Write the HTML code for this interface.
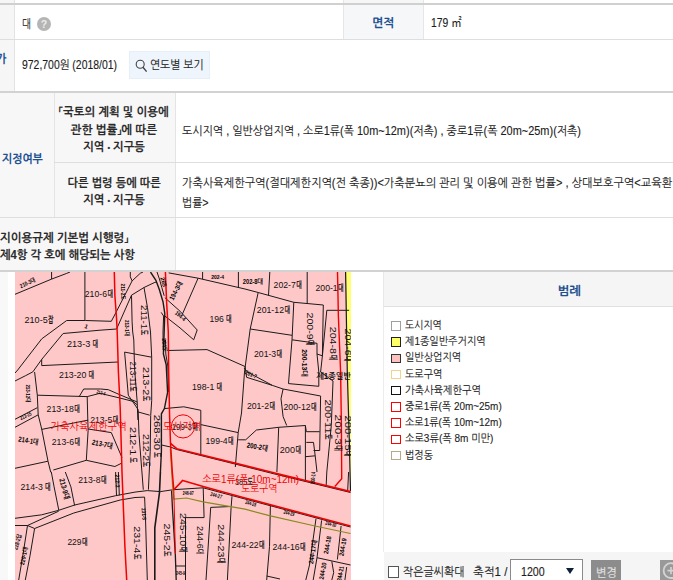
<!DOCTYPE html>
<html lang="ko">
<head>
<meta charset="utf-8">
<title>토지이용계획</title>
<style>
html,body{margin:0;padding:0;}
body{width:673px;height:580px;overflow:hidden;background:#fff;position:relative;font-family:"Liberation Sans","NanumGothic","Noto Sans CJK KR",sans-serif;font-size:12px;color:#1c1c1c;}
.abs{position:absolute;}
.hl{position:absolute;left:0;width:673px;height:1px;background:#dedede;}
.t{position:absolute;white-space:nowrap;line-height:20px;height:20px;-webkit-text-stroke:0.12px currentColor;}
.b{font-weight:bold;font-size:12px;color:#2a2a2a;}
.bl{color:#1d4f91;}
.c{width:300px;text-align:center;}
.c .s{transform-origin:50% 50%;}
.s{display:inline-block;transform-origin:0 50%;}
.lg{position:absolute;left:391px;width:7.5px;height:7.5px;border:1px solid #999;}
.l11{font-size:11px;}
.mt{font-family:"Liberation Sans","NanumGothic",sans-serif;}
</style>
</head>
<body>
<div class="abs" style="left:0;top:0;width:14px;height:91px;background:#f6f6f7;"></div>
<div class="abs" style="left:14px;top:0;width:1px;height:91px;background:#e3e3e3;"></div>
<div class="abs" style="left:343px;top:0;width:81px;height:3px;background:#f6f6f7;border-left:1px solid #e6e6e6;border-right:1px solid #e6e6e6;box-sizing:border-box;"></div>
<div class="abs" style="left:0;top:3px;width:673px;height:2px;background:#d0d0d0;"></div>
<div class="hl" style="top:39px;"></div>
<div class="abs" style="left:37px;top:16.5px;width:14px;height:14px;border-radius:50%;background:#b5b5b5;color:#ececec;font-size:10.5px;font-weight:bold;line-height:14.5px;text-align:center;">?</div>
<div class="abs" style="left:343px;top:5px;width:81px;height:34px;background:#f6f7f9;border-left:1px solid #e6e6e6;border-right:1px solid #e6e6e6;box-sizing:border-box;"></div>
<div class="abs" style="left:129px;top:51px;width:81px;height:28px;background:#eef5fc;border:1px solid #e6eef7;box-sizing:border-box;"></div>
<svg class="abs" style="left:134px;top:58px;" width="14" height="15" viewBox="134 58 14 15"><circle cx="140.2" cy="64.2" r="4" fill="none" stroke="#444" stroke-width="1.1"/><path d="M143 67.2L146.6 71.6" stroke="#444" stroke-width="1.4" fill="none"/></svg>
<div class="t" style="left:22px;top:14.0px;"><span id="t_dae" class="s" style="transform:scaleX(0.7978)">대</span></div>
<div class="t b bl c" style="left:233.5px;top:13.0px;"><span id="t_myun" class="s" style="transform:scaleX(0.9751)">면적</span></div>
<div class="t" style="left:431px;top:13.0px;"><span id="t_area" class="s" style="transform:scaleX(0.8626)">179 ㎡</span></div>
<div class="t b bl" style="left:-4px;top:49.0px;"><span id="t_ga" class="s" style="transform:scaleX(0.9200)">가</span></div>
<div class="t" style="left:22px;top:54.5px;"><span id="t_price" class="s" style="transform:scaleX(0.8686)">972,700원 (2018/01)</span></div>
<div class="t" style="left:150px;top:55.0px;"><span id="t_btn" class="s" style="transform:scaleX(0.8956)">연도별 보기</span></div>
<div class="abs" style="left:0;top:91px;width:673px;height:2px;background:#d2d2d2;"></div>
<div class="abs" style="left:0;top:93px;width:175px;height:177px;background:#f7f7f7;"></div>
<div class="abs" style="left:54px;top:93px;width:1px;height:125px;background:#e4e4e4;"></div>
<div class="abs" style="left:175px;top:93px;width:1px;height:177px;background:#e4e4e4;"></div>
<div class="hl" style="left:54px;width:619px;top:162px;"></div>
<div class="hl" style="top:217px;"></div>
<div class="t b bl" style="left:2px;top:149.3px;"><span id="t_jj" class="s" style="transform:scaleX(0.9042)">지정여부</span></div>
<div class="t b c" style="left:-35.8px;top:101.5px;"><span id="t_h1a" class="s" style="transform:scaleX(0.9469)">「국토의 계획 및 이용에</span></div>
<div class="t b c" style="left:-35.8px;top:119.5px;"><span id="t_h1b" class="s" style="transform:scaleX(0.9583)">관한 법률」에 따른</span></div>
<div class="t b c" style="left:-35.8px;top:136.5px;"><span id="t_h1c" class="s" style="transform:scaleX(0.9331)">지역 <span style="font-size:8px;position:relative;top:-1px">•</span> 지구등</span></div>
<div class="t b c" style="left:-35.8px;top:172.5px;"><span id="t_h2a" class="s" style="transform:scaleX(0.9277)">다른 법령 등에 따른</span></div>
<div class="t b c" style="left:-35.8px;top:190.0px;"><span id="t_h2b" class="s" style="transform:scaleX(0.9331)">지역 <span style="font-size:8px;position:relative;top:-1px">•</span> 지구등</span></div>
<div class="t b" style="left:0px;top:227.5px;"><span id="t_h3a" class="s" style="transform:scaleX(0.9506)">지이용규제 기본법 시행령」</span></div>
<div class="t b" style="left:0px;top:244.5px;"><span id="t_h3b" class="s" style="transform:scaleX(0.9362)">제4항 각 호에 해당되는 사항</span></div>
<div class="t" style="left:182px;top:120.5px;"><span id="t_r1" class="s" style="transform:scaleX(0.9119)">도시지역 , 일반상업지역 , 소로1류(폭 10m~12m)(저촉) , 중로1류(폭 20m~25m)(저촉)</span></div>
<div class="t" style="left:182px;top:173.0px;"><span id="t_r2" class="s" style="transform:scaleX(0.9256)"><span id="t_r2a">가축사육제한구역(절대제한지역(전 축종))&lt;가축분뇨의 관리 및 이용에 관한 법률&gt;</span> , 상대보호구역&lt;교육환경 보호에 관한</span></div>
<div class="t" style="left:182px;top:192.5px;"><span id="t_r3" class="s" style="transform:scaleX(0.8993)">법률&gt;</span></div>
<div class="abs" style="left:0;top:270px;width:673px;height:2px;background:#d2d2d2;"></div>
<div class="abs" style="left:0;top:272px;width:8px;height:308px;background:#f8f8f8;"></div>
<div class="abs" style="left:15px;top:272px;width:336px;height:308px;background:#ffc8c8;overflow:hidden;">
<svg id="mapsvg" width="336" height="308" viewBox="15 272 336 308" style="position:absolute;left:0;top:0;" font-family="'Liberation Sans','NanumGothic',sans-serif">
<rect x="15" y="272" width="336" height="308" fill="#ffc8c8"/>
<path d="M346 272 L351 272 L351 492 L350.5 491 L349.3 440 L347.3 372 Z" fill="#ffff70"/>
<g shape-rendering="auto">
<path d="M15.0 294.3 L51.6 279.1 L66.7 273.4 L70.0 272.0" stroke="#1a1a1a" stroke-width="1" fill="none"/>
<path d="M51.6 272.0 L51.6 279.1" stroke="#1a1a1a" stroke-width="1" fill="none"/>
<path d="M84.9 272.0 L84.9 320.3" stroke="#1a1a1a" stroke-width="1" fill="none"/>
<path d="M15.0 373.0 L17.7 370.0 L41.7 338.9 L66.7 320.5 L85.4 320.5 L111.3 321.3 L116.0 312.4 L132.1 280.9 L140.4 273.2 L143.0 272.0" stroke="#1a1a1a" stroke-width="1" fill="none"/>
<path d="M132.1 280.9 L130.3 276.8 L130.3 272.0" stroke="#1a1a1a" stroke-width="1" fill="none"/>
<path d="M15.0 381.0 L25.7 375.6 L32.8 371.9 L41.7 359.4 L63.1 333.5 L100.0 330.2 L116.6 329.0 L131.5 295.2 L144.0 287.5 L154.1 282.7 L157.0 281.8" stroke="#1a1a1a" stroke-width="1" fill="none"/>
<path d="M41.7 359.4 L41.7 365.6 L118.0 362.0" stroke="#1a1a1a" stroke-width="1" fill="none"/>
<path d="M150.5 272.0 L155.9 280.3 L159.4 289.8 L163.0 301.7 L164.8 313.6 L163.4 353.8 L166.2 364.8 L167.6 392.4 L164.4 408.6 L161.4 413.8 L161.4 451.7 L160.4 472.0" stroke="#1a1a1a" stroke-width="1.4" fill="none"/>
<path d="M157.0 272.0 L159.4 279.0 L161.8 287.5 L164.2 295.8" stroke="#1a1a1a" stroke-width="1" fill="none"/>
<path d="M161.2 312.4 L163.6 316.0 L163.0 332.0 L163.2 350.0" stroke="#1a1a1a" stroke-width="1" fill="none"/>
<path d="M165.5 340.0 L165.8 354.0 L167.8 366.0 L168.6 392.0" stroke="#1a1a1a" stroke-width="1" fill="none"/>
<path d="M131.5 295.2 L132.1 321.9 L132.7 332.0 L133.8 340.0 L134.5 367.6 L137.2 402.0 L137.9 420.0" stroke="#1a1a1a" stroke-width="1" fill="none"/>
<path d="M144.0 287.5 L147.5 307.7 L150.5 332.0 L151.7 357.2 L151.7 400.7 L150.7 415.5 L150.2 451.7 L148.4 489.7" stroke="#1a1a1a" stroke-width="1" fill="none"/>
<path d="M124.6 352.1 L151.7 357.2" stroke="#1a1a1a" stroke-width="1" fill="none"/>
<path d="M124.6 352.1 L128.3 395.2 L138.1 409.5 L139.0 434.5 L143.3 489.7" stroke="#1a1a1a" stroke-width="1" fill="none"/>
<path d="M168.7 272.9 L198.1 278.2 L245.0 289.0 L258.2 292.5 L293.8 302.3 L323.3 305.0" stroke="#1a1a1a" stroke-width="1" fill="none"/>
<path d="M198.1 278.2 L182.1 314.8" stroke="#1a1a1a" stroke-width="1" fill="none"/>
<path d="M164.8 297.6 L180.0 311.2 L197.2 330.0 L193.7 339.8 L180.0 327.9 L164.8 316.0" stroke="#1a1a1a" stroke-width="1" fill="none"/>
<path d="M202.6 272.0 L202.6 279.1" stroke="#1a1a1a" stroke-width="1" fill="none"/>
<path d="M238.4 272.0 L238.4 287.5" stroke="#1a1a1a" stroke-width="1" fill="none"/>
<path d="M167.4 350.5 L207.0 349.6 L245.0 366.5 L246.6 377.3 L272.4 385.4 L283.1 389.0 L320.6 396.0" stroke="#1a1a1a" stroke-width="1" fill="none"/>
<path d="M269.8 272.0 L268.5 295.5" stroke="#1a1a1a" stroke-width="1" fill="none"/>
<path d="M307.2 272.0 L307.2 303.5" stroke="#1a1a1a" stroke-width="1" fill="none"/>
<path d="M258.2 292.5 L250.2 329.0 L244.5 372.0 L241.5 413.0 L238.2 432.6 L235.6 463.8 L235.3 467.0" stroke="#1a1a1a" stroke-width="1" fill="none"/>
<path d="M250.2 329.0 L292.0 335.3" stroke="#1a1a1a" stroke-width="1" fill="none"/>
<path d="M293.8 302.3 L292.0 339.8 L317.0 343.3 L317.0 354.0 L322.4 355.8 L323.3 305.0" stroke="#1a1a1a" stroke-width="1" fill="none"/>
<path d="M292.0 339.8 L289.4 372.0 L288.5 383.6 L318.8 386.3 L318.8 372.0 L317.0 354.0" stroke="#1a1a1a" stroke-width="1" fill="none"/>
<path d="M326.8 310.3 L349.1 310.3" stroke="#1a1a1a" stroke-width="1" fill="none"/>
<path d="M326.8 310.3 L322.4 355.8 L320.6 372.0 L333.0 381.0 L331.3 425.5 L326.8 472.0 L326.2 485.0" stroke="#1a1a1a" stroke-width="1" fill="none"/>
<path d="M345.6 272.0 L347.3 372.0 L349.3 440.0 L350.5 491.0" stroke="#1a1a1a" stroke-width="1.2" fill="none"/>
<path d="M244.0 368.0 L247.5 372.0 L272.4 385.4" stroke="#1a1a1a" stroke-width="1" fill="none"/>
<path d="M34.6 372.0 L37.3 395.2 L38.2 414.8 L41.7 429.0 L48.0 461.2 L50.7 472.0 L51.3 472.0 L54.1 486.9 L58.8 510.2" stroke="#1a1a1a" stroke-width="1" fill="none"/>
<path d="M37.3 395.2 L87.2 396.6" stroke="#1a1a1a" stroke-width="1" fill="none"/>
<path d="M79.2 396.6 L83.7 389.0 L100.6 389.0 L108.3 389.7 L119.3 394.5 L137.2 402.0" stroke="#1a1a1a" stroke-width="1" fill="none"/>
<path d="M87.2 396.6 L100.0 393.3 L119.3 397.9 L133.1 401.4 L137.2 404.8" stroke="#1a1a1a" stroke-width="1" fill="none"/>
<path d="M87.2 396.6 L88.1 430.8 L86.3 460.3" stroke="#1a1a1a" stroke-width="1" fill="none"/>
<path d="M41.7 429.4 L88.1 420.1" stroke="#1a1a1a" stroke-width="1" fill="none"/>
<path d="M88.1 429.0 L111.3 432.6 L122.0 457.6" stroke="#1a1a1a" stroke-width="1" fill="none"/>
<path d="M48.0 461.2 L15.0 468.3" stroke="#1a1a1a" stroke-width="1" fill="none"/>
<path d="M53.3 470.0 L86.3 460.3 L114.9 466.5 L122.0 463.0" stroke="#1a1a1a" stroke-width="1" fill="none"/>
<path d="M15.0 419.3 L37.3 407.7" stroke="#1a1a1a" stroke-width="1" fill="none"/>
<path d="M15.0 427.3 L38.2 414.8" stroke="#1a1a1a" stroke-width="1" fill="none"/>
<path d="M164.2 408.6 L183.8 406.8 L200.8 410.3 L200.8 455.0" stroke="#1a1a1a" stroke-width="1" fill="none"/>
<path d="M200.8 424.6 L238.2 432.6" stroke="#1a1a1a" stroke-width="1" fill="none"/>
<path d="M238.2 439.8 L245.7 439.8 L256.4 430.0 L278.7 427.3 L305.4 425.5 L306.3 431.7 L319.7 431.7" stroke="#1a1a1a" stroke-width="1" fill="none"/>
<path d="M161.6 445.0 L170.5 447.0 L176.7 449.5 L245.0 466.5 L270.7 473.0 L350.5 492.5" stroke="#1a1a1a" stroke-width="1" fill="none"/>
<path d="M137.2 411.7 L149.7 415.2" stroke="#1a1a1a" stroke-width="1" fill="none"/>
<path d="M283.1 389.0 L281.0 398.7 L283.1 416.6 L286.7 425.5" stroke="#1a1a1a" stroke-width="1" fill="none"/>
<path d="M320.6 396.0 L319.7 450.5 L313.5 450.5" stroke="#1a1a1a" stroke-width="1" fill="none"/>
<path d="M278.7 427.3 L276.9 472.0" stroke="#1a1a1a" stroke-width="1" fill="none"/>
<path d="M305.4 425.5 L305.4 481.3" stroke="#1a1a1a" stroke-width="1" fill="none"/>
<path d="M306.3 442.4 L313.5 442.4 L315.2 455.8 L305.4 456.7" stroke="#1a1a1a" stroke-width="1" fill="none"/>
<path d="M315.2 455.8 L317.0 472.0" stroke="#1a1a1a" stroke-width="1" fill="none"/>
<path d="M65.3 472.0 L70.9 486.9 L74.6 505.5" stroke="#1a1a1a" stroke-width="1" fill="none"/>
<path d="M15.0 518.3 L41.7 514.8 L58.7 510.3 L74.7 505.0 L115.7 495.7 L135.0 492.1 L147.3 490.6 L160.4 491.6 L173.4 489.7 L203.2 487.8" stroke="#1a1a1a" stroke-width="1" fill="none"/>
<path d="M15.0 525.5 L27.5 525.5 L58.7 511.2" stroke="#1a1a1a" stroke-width="1" fill="none"/>
<path d="M27.5 525.5 L34.6 528.5 L73.8 513.0 L120.2 500.0 L135.0 497.5 L144.6 497.1" stroke="#1a1a1a" stroke-width="1" fill="none"/>
<path d="M27.5 525.5 L23.4 552.0 L18.7 580.0" stroke="#1a1a1a" stroke-width="1" fill="none"/>
<path d="M34.6 528.5 L30.0 555.8 L25.3 580.0" stroke="#1a1a1a" stroke-width="1" fill="none"/>
<path d="M115.6 472.0 L116.5 495.8" stroke="#1a1a1a" stroke-width="1" fill="none"/>
<path d="M118.4 472.0 L119.3 495.3" stroke="#1a1a1a" stroke-width="1" fill="none"/>
<path d="M144.6 497.1 L145.5 518.6 L147.3 580.0" stroke="#1a1a1a" stroke-width="1" fill="none"/>
<path d="M160.4 472.0 L159.5 492.5 L154.8 527.9 L154.8 580.0" stroke="#1a1a1a" stroke-width="1.6" fill="none"/>
<path d="M171.6 490.6 L172.5 509.2 L175.3 554.0 L176.2 580.0" stroke="#1a1a1a" stroke-width="1.3" fill="none"/>
<path d="M203.2 487.8 L204.1 517.6 L185.5 517.6 L185.5 580.0" stroke="#1a1a1a" stroke-width="1" fill="none"/>
<path d="M175.3 566.0 L185.5 566.0" stroke="#1a1a1a" stroke-width="1" fill="none"/>
<path d="M210.7 507.4 L206.0 580.0" stroke="#1a1a1a" stroke-width="1" fill="none"/>
<path d="M210.7 507.4 L231.1 506.5" stroke="#1a1a1a" stroke-width="1" fill="none"/>
<path d="M232.0 496.2 L231.1 507.4 L227.4 580.0" stroke="#1a1a1a" stroke-width="1" fill="none"/>
<path d="M203.2 487.8 L245.0 499.0 L350.5 527.0" stroke="#1a1a1a" stroke-width="1" fill="none"/>
<path d="M270.4 504.6 L269.5 546.5 L266.7 580.0" stroke="#1a1a1a" stroke-width="1" fill="none"/>
<path d="M316.0 518.6 L309.5 565.0 L305.8 580.0" stroke="#1a1a1a" stroke-width="1" fill="none"/>
<path d="M321.6 520.4 L317.0 557.7 L313.2 580.0" stroke="#1a1a1a" stroke-width="1" fill="none"/>
<path d="M317.0 557.7 L350.5 565.0" stroke="#1a1a1a" stroke-width="1" fill="none"/>
<path d="M341.1 526.0 L337.4 559.5" stroke="#1a1a1a" stroke-width="1" fill="none"/>
<path d="M331.8 561.4 L333.7 572.6 L331.8 580.0" stroke="#1a1a1a" stroke-width="1" fill="none"/>
<path d="M346.7 567.0 L344.9 580.0" stroke="#1a1a1a" stroke-width="1" fill="none"/>
<path d="M348.6 472.0 L347.7 490.6" stroke="#1a1a1a" stroke-width="1" fill="none"/>
<path d="M266.7 576.0 L280.0 579.0" stroke="#1a1a1a" stroke-width="1" fill="none"/>
</g>
<path d="M170.3 449.0 L172.6 486.0 L173.8 499.0 L186.5 498.0 L203.2 501.8 L245.0 509.2 L270.4 515.8 L315.0 526.0 L350.5 533.5" stroke="#8a8a20" stroke-width="1.2" fill="none"/>
<path d="M114.3 272.0 L114.9 295.8 L116.6 319.5 L117.2 332.0 L118.4 372.0 L120.2 407.7 L122.0 472.0 L123.0 498.0 L124.9 546.5 L126.7 580.0" stroke="#f00000" stroke-width="1.5" fill="none" stroke-linejoin="round"/>
<path d="M165.4 272.0 L166.6 301.7 L168.3 332.0 L168.7 372.0 L169.6 416.6 L170.5 443.3 L172.3 472.0 L173.8 489.7" stroke="#f00000" stroke-width="1.5" fill="none" stroke-linejoin="round"/>
<path d="M173.8 489.7 L174.6 520.0 L175.3 554.0" stroke="#f00000" stroke-width="1" fill="none" stroke-linejoin="round"/>
<path d="M170.5 443.3 L176.7 448.7 L245.0 465.6 L270.7 472.0 L350.5 491.6" stroke="#f00000" stroke-width="1.6" fill="none" stroke-linejoin="round"/>
<path d="M173.8 489.7 L182.7 480.4 L203.2 486.5 L245.0 498.0 L350.5 526.0" stroke="#f00000" stroke-width="1.6" fill="none" stroke-linejoin="round"/>
<path d="M337.5 272.0 L338.4 316.6 L340.6 372.0 L341.4 425.5 L341.7 478.8 L334.8 486.5" stroke="#f00000" stroke-width="1.4" fill="none" stroke-linejoin="round"/>
<circle cx="183" cy="426.4" r="11.6" fill="none" stroke="#f00000" stroke-width="1"/>
<g>
<g font-size="9.3" fill="#111" dominant-baseline="central"><text x="84.8" y="293.8" textLength="22.2" lengthAdjust="spacingAndGlyphs" dominant-baseline="central">210-6</text><text x="107.4" y="293.8" textLength="5.4" lengthAdjust="spacingAndGlyphs" dominant-baseline="central" stroke="#111" stroke-width="0.35">대</text></g>
<g font-size="9.3" fill="#111" dominant-baseline="central"><text x="24.5" y="320.0" textLength="23.2" lengthAdjust="spacingAndGlyphs" dominant-baseline="central">210-5</text><text x="48.1" y="320.0" textLength="5.4" lengthAdjust="spacingAndGlyphs" dominant-baseline="central" stroke="#111" stroke-width="0.35">잡</text></g>
<g font-size="9.3" fill="#111" dominant-baseline="central"><text x="66.9" y="344.2" textLength="23.4" lengthAdjust="spacingAndGlyphs" dominant-baseline="central">213-3</text><text x="92.5" y="344.2" textLength="5.4" lengthAdjust="spacingAndGlyphs" dominant-baseline="central" stroke="#111" stroke-width="0.35">대</text></g>
<g font-size="9.3" fill="#111" dominant-baseline="central"><text x="59.0" y="374.7" textLength="27.4" lengthAdjust="spacingAndGlyphs" dominant-baseline="central">213-20</text><text x="88.6" y="374.7" textLength="5.4" lengthAdjust="spacingAndGlyphs" dominant-baseline="central" stroke="#111" stroke-width="0.35">대</text></g>
<g font-size="9.3" fill="#111" dominant-baseline="central"><text x="46.6" y="409.4" textLength="27.2" lengthAdjust="spacingAndGlyphs" dominant-baseline="central">213-18</text><text x="74.2" y="409.4" textLength="5.4" lengthAdjust="spacingAndGlyphs" dominant-baseline="central" stroke="#111" stroke-width="0.35">대</text></g>
<g font-size="9.3" fill="#111" dominant-baseline="central"><text x="90.2" y="419.8" textLength="22.2" lengthAdjust="spacingAndGlyphs" dominant-baseline="central">213-5</text><text x="112.8" y="419.8" textLength="5.4" lengthAdjust="spacingAndGlyphs" dominant-baseline="central" stroke="#111" stroke-width="0.35">대</text></g>
<g font-size="9.3" fill="#111" dominant-baseline="central"><text x="51.8" y="442.4" textLength="22.2" lengthAdjust="spacingAndGlyphs" dominant-baseline="central">213-6</text><text x="74.4" y="442.4" textLength="5.4" lengthAdjust="spacingAndGlyphs" dominant-baseline="central" stroke="#111" stroke-width="0.35">대</text></g>
<text x="102.4" y="444.2" font-size="7.5" fill="#000" text-anchor="middle" dominant-baseline="central" font-weight="bold" textLength="21.0" lengthAdjust="spacingAndGlyphs" transform="rotate(12 102.4 444.2)">213-7대</text>
<text x="28.4" y="440.7" font-size="7.5" fill="#000" text-anchor="middle" dominant-baseline="central" font-weight="bold" textLength="20.0" lengthAdjust="spacingAndGlyphs" transform="rotate(10 28.4 440.7)">214-1대</text>
<g font-size="9.3" fill="#111" dominant-baseline="central"><text x="20.5" y="487.3" textLength="22.4" lengthAdjust="spacingAndGlyphs" dominant-baseline="central">214-3</text><text x="45.1" y="487.3" textLength="5.4" lengthAdjust="spacingAndGlyphs" dominant-baseline="central" stroke="#111" stroke-width="0.35">대</text></g>
<g font-size="9.3" fill="#111" dominant-baseline="central"><text x="78.3" y="479.8" textLength="22.2" lengthAdjust="spacingAndGlyphs" dominant-baseline="central">213-8</text><text x="100.9" y="479.8" textLength="5.4" lengthAdjust="spacingAndGlyphs" dominant-baseline="central" stroke="#111" stroke-width="0.35">대</text></g>
<g font-size="9.3" fill="#111" dominant-baseline="central"><text x="67.4" y="541.8" textLength="14.2" lengthAdjust="spacingAndGlyphs" dominant-baseline="central">229</text><text x="82.0" y="541.8" textLength="5.4" lengthAdjust="spacingAndGlyphs" dominant-baseline="central" stroke="#111" stroke-width="0.35">대</text></g>
<text x="64.3" y="488.8" font-size="7.5" fill="#000" text-anchor="middle" dominant-baseline="central" font-weight="bold" textLength="21.0" lengthAdjust="spacingAndGlyphs" transform="rotate(75 64.3 488.8)">213-9대</text>
<text x="27.5" y="283.0" font-size="6" fill="#000" text-anchor="middle" dominant-baseline="central" font-weight="bold" textLength="16.0" lengthAdjust="spacingAndGlyphs" transform="rotate(-25 27.5 283.0)">210-3대</text>
<text x="122.5" y="291.6" font-size="6" fill="#000" text-anchor="middle" dominant-baseline="central" font-weight="bold" textLength="16.0" lengthAdjust="spacingAndGlyphs" transform="rotate(90 122.5 291.6)">211-2도</text>
<text x="127.3" y="328.0" font-size="6" fill="#000" text-anchor="middle" dominant-baseline="central" font-weight="bold" textLength="16.0" lengthAdjust="spacingAndGlyphs" transform="rotate(90 127.3 328.0)">213-1대</text>
<text x="27.5" y="393.4" font-size="6" fill="#000" text-anchor="middle" dominant-baseline="central" font-weight="bold" textLength="18.0" lengthAdjust="spacingAndGlyphs" transform="rotate(90 27.5 393.4)">213-12대</text>
<text x="25.7" y="415.7" font-size="5.5" fill="#000" text-anchor="middle" dominant-baseline="central" font-weight="bold" textLength="12.0" lengthAdjust="spacingAndGlyphs" transform="rotate(-25 25.7 415.7)">213-15</text>
<text x="17.5" y="542.0" font-size="6" fill="#000" text-anchor="middle" dominant-baseline="central" font-weight="bold" textLength="16.0" lengthAdjust="spacingAndGlyphs" transform="rotate(-75 17.5 542.0)">228-2답</text>
<text x="24.0" y="556.0" font-size="6" fill="#000" text-anchor="middle" dominant-baseline="central" font-weight="bold" textLength="18.0" lengthAdjust="spacingAndGlyphs" transform="rotate(-78 24.0 556.0)">229-1대</text>
<text x="86.3" y="326.5" font-size="6" fill="#000" text-anchor="middle" dominant-baseline="central" font-weight="bold" transform="rotate(20 86.3 326.5)">1</text>
<g transform="rotate(90 143.7 320.1)" font-size="9.3" fill="#111" dominant-baseline="central"><text x="128.7" y="320.1" textLength="24.2" lengthAdjust="spacingAndGlyphs" dominant-baseline="central">211-1</text><text x="153.3" y="320.1" textLength="5.4" lengthAdjust="spacingAndGlyphs" dominant-baseline="central" stroke="#111" stroke-width="0.35">도</text></g>
<g transform="rotate(90 133.1 376.6)" font-size="8.6" fill="#111" dominant-baseline="central"><text x="118.1" y="376.6" textLength="24.7" lengthAdjust="spacingAndGlyphs" dominant-baseline="central">213-11</text><text x="143.1" y="376.6" textLength="5.0" lengthAdjust="spacingAndGlyphs" dominant-baseline="central" stroke="#111" stroke-width="0.35">도</text></g>
<g transform="rotate(90 146.2 384.1)" font-size="9.3" fill="#111" dominant-baseline="central"><text x="129.2" y="384.1" textLength="28.2" lengthAdjust="spacingAndGlyphs" dominant-baseline="central">213-2</text><text x="157.8" y="384.1" textLength="5.4" lengthAdjust="spacingAndGlyphs" dominant-baseline="central" stroke="#111" stroke-width="0.35">도</text></g>
<g font-size="9.3" fill="#111" dominant-baseline="central"><text x="209.4" y="319.3" textLength="14.4" lengthAdjust="spacingAndGlyphs" dominant-baseline="central">196</text><text x="226.0" y="319.3" textLength="5.4" lengthAdjust="spacingAndGlyphs" dominant-baseline="central" stroke="#111" stroke-width="0.35">대</text></g>
<text x="175.8" y="290.7" font-size="7" fill="#000" text-anchor="middle" dominant-baseline="central" font-weight="bold" textLength="20.0" lengthAdjust="spacingAndGlyphs" transform="rotate(-62 175.8 290.7)">194-3대</text>
<text x="180.5" y="316.0" font-size="6" fill="#000" text-anchor="middle" dominant-baseline="central" font-weight="bold" textLength="12.0" lengthAdjust="spacingAndGlyphs" transform="rotate(40 180.5 316.0)">194-4</text>
<text x="217.7" y="277.3" font-size="6" fill="#000" text-anchor="middle" dominant-baseline="central" font-weight="bold" textLength="13.0" lengthAdjust="spacingAndGlyphs">202-4</text>
<text x="252.8" y="281.0" font-size="7" fill="#000" text-anchor="middle" dominant-baseline="central" font-weight="bold" textLength="20.0" lengthAdjust="spacingAndGlyphs">202-8대</text>
<g font-size="9.3" fill="#111" dominant-baseline="central"><text x="273.6" y="284.5" textLength="22.2" lengthAdjust="spacingAndGlyphs" dominant-baseline="central">202-7</text><text x="296.2" y="284.5" textLength="5.4" lengthAdjust="spacingAndGlyphs" dominant-baseline="central" stroke="#111" stroke-width="0.35">대</text></g>
<g font-size="9.3" fill="#111" dominant-baseline="central"><text x="315.5" y="288.4" textLength="22.2" lengthAdjust="spacingAndGlyphs" dominant-baseline="central">200-1</text><text x="338.1" y="288.4" textLength="5.4" lengthAdjust="spacingAndGlyphs" dominant-baseline="central" stroke="#111" stroke-width="0.35">대</text></g>
<g font-size="9.3" fill="#111" dominant-baseline="central"><text x="256.8" y="310.3" textLength="27.2" lengthAdjust="spacingAndGlyphs" dominant-baseline="central">201-12</text><text x="284.4" y="310.3" textLength="5.4" lengthAdjust="spacingAndGlyphs" dominant-baseline="central" stroke="#111" stroke-width="0.35">대</text></g>
<g font-size="9.3" fill="#111" dominant-baseline="central"><text x="254.0" y="354.0" textLength="22.2" lengthAdjust="spacingAndGlyphs" dominant-baseline="central">201-3</text><text x="276.6" y="354.0" textLength="5.4" lengthAdjust="spacingAndGlyphs" dominant-baseline="central" stroke="#111" stroke-width="0.35">대</text></g>
<g transform="rotate(90 309.9 329.0)" font-size="9.3" fill="#111" dominant-baseline="central"><text x="293.4" y="329.0" textLength="27.2" lengthAdjust="spacingAndGlyphs" dominant-baseline="central">200-9</text><text x="321.0" y="329.0" textLength="5.4" lengthAdjust="spacingAndGlyphs" dominant-baseline="central" stroke="#111" stroke-width="0.35">대</text></g>
<g transform="rotate(90 332.7 343.3)" font-size="9.3" fill="#111" dominant-baseline="central"><text x="316.2" y="343.3" textLength="27.2" lengthAdjust="spacingAndGlyphs" dominant-baseline="central">204-8</text><text x="343.8" y="343.3" textLength="5.4" lengthAdjust="spacingAndGlyphs" dominant-baseline="central" stroke="#111" stroke-width="0.35">대</text></g>
<g transform="rotate(90 348.0 345.0)" font-size="9.3" fill="#111" dominant-baseline="central"><text x="331.5" y="345.0" textLength="27.2" lengthAdjust="spacingAndGlyphs" dominant-baseline="central">204-6</text><text x="359.1" y="345.0" textLength="5.4" lengthAdjust="spacingAndGlyphs" dominant-baseline="central" stroke="#111" stroke-width="0.35">대</text></g>
<text x="304.8" y="363.0" font-size="7.5" fill="#000" text-anchor="middle" dominant-baseline="central" font-weight="bold" textLength="27.6" lengthAdjust="spacingAndGlyphs" transform="rotate(90 304.8 363.0)">200-13대</text>
<g font-size="9.3" fill="#111" dominant-baseline="central"><text x="192.0" y="386.6" textLength="22.4" lengthAdjust="spacingAndGlyphs" dominant-baseline="central">198-1</text><text x="216.6" y="386.6" textLength="5.4" lengthAdjust="spacingAndGlyphs" dominant-baseline="central" stroke="#111" stroke-width="0.35">대</text></g>
<g font-size="9.3" fill="#111" dominant-baseline="central"><text x="205.5" y="441.2" textLength="22.2" lengthAdjust="spacingAndGlyphs" dominant-baseline="central">199-4</text><text x="228.1" y="441.2" textLength="5.4" lengthAdjust="spacingAndGlyphs" dominant-baseline="central" stroke="#111" stroke-width="0.35">대</text></g>
<g font-size="9.3" fill="#111" dominant-baseline="central"><text x="171.7" y="427.0" textLength="20.2" lengthAdjust="spacingAndGlyphs" dominant-baseline="central">199-3</text><text x="192.3" y="427.0" textLength="5.4" lengthAdjust="spacingAndGlyphs" dominant-baseline="central" stroke="#111" stroke-width="0.35">대</text></g>
<g transform="rotate(90 157.2 436.2)" font-size="9.3" fill="#111" dominant-baseline="central"><text x="135.7" y="436.2" textLength="35.4" lengthAdjust="spacingAndGlyphs" dominant-baseline="central">268-30</text><text x="173.3" y="436.2" textLength="5.4" lengthAdjust="spacingAndGlyphs" dominant-baseline="central" stroke="#111" stroke-width="0.35">도</text></g>
<g transform="rotate(90 132.5 445.0)" font-size="9.3" fill="#111" dominant-baseline="central"><text x="114.5" y="445.0" textLength="28.4" lengthAdjust="spacingAndGlyphs" dominant-baseline="central">212-1</text><text x="145.1" y="445.0" textLength="5.4" lengthAdjust="spacingAndGlyphs" dominant-baseline="central" stroke="#111" stroke-width="0.35">도</text></g>
<g transform="rotate(90 146.4 450.5)" font-size="9.3" fill="#111" dominant-baseline="central"><text x="129.9" y="450.5" textLength="27.2" lengthAdjust="spacingAndGlyphs" dominant-baseline="central">212-2</text><text x="157.5" y="450.5" textLength="5.4" lengthAdjust="spacingAndGlyphs" dominant-baseline="central" stroke="#111" stroke-width="0.35">도</text></g>
<g font-size="9.3" fill="#111" dominant-baseline="central"><text x="246.9" y="406.2" textLength="22.2" lengthAdjust="spacingAndGlyphs" dominant-baseline="central">201-2</text><text x="269.5" y="406.2" textLength="5.4" lengthAdjust="spacingAndGlyphs" dominant-baseline="central" stroke="#111" stroke-width="0.35">대</text></g>
<g font-size="9.3" fill="#111" dominant-baseline="central"><text x="283.5" y="407.3" textLength="27.2" lengthAdjust="spacingAndGlyphs" dominant-baseline="central">200-12</text><text x="311.1" y="407.3" textLength="5.4" lengthAdjust="spacingAndGlyphs" dominant-baseline="central" stroke="#111" stroke-width="0.35">대</text></g>
<g font-size="9.3" fill="#111" dominant-baseline="central"><text x="279.8" y="449.6" textLength="15.2" lengthAdjust="spacingAndGlyphs" dominant-baseline="central">200</text><text x="295.4" y="449.6" textLength="5.4" lengthAdjust="spacingAndGlyphs" dominant-baseline="central" stroke="#111" stroke-width="0.35">대</text></g>
<text x="257.3" y="446.9" font-size="7.5" fill="#000" text-anchor="middle" dominant-baseline="central" font-weight="bold" textLength="21.0" lengthAdjust="spacingAndGlyphs" transform="rotate(10 257.3 446.9)">200-2대</text>
<g transform="rotate(90 327.7 419.5)" font-size="9.3" fill="#111" dominant-baseline="central"><text x="307.7" y="419.5" textLength="34.2" lengthAdjust="spacingAndGlyphs" dominant-baseline="central">200-11</text><text x="342.3" y="419.5" textLength="5.4" lengthAdjust="spacingAndGlyphs" dominant-baseline="central" stroke="#111" stroke-width="0.35">도</text></g>
<g transform="rotate(90 337.5 432.6)" font-size="9.3" fill="#111" dominant-baseline="central"><text x="319.5" y="432.6" textLength="30.2" lengthAdjust="spacingAndGlyphs" dominant-baseline="central">200-3</text><text x="350.1" y="432.6" textLength="5.4" lengthAdjust="spacingAndGlyphs" dominant-baseline="central" stroke="#111" stroke-width="0.35">대</text></g>
<g transform="rotate(90 347.7 436.0)" font-size="9.3" fill="#111" dominant-baseline="central"><text x="327.2" y="436.0" textLength="35.2" lengthAdjust="spacingAndGlyphs" dominant-baseline="central">200-15</text><text x="362.8" y="436.0" textLength="5.4" lengthAdjust="spacingAndGlyphs" dominant-baseline="central" stroke="#111" stroke-width="0.35">대</text></g>
<text x="333.6" y="376.0" font-size="8.5" fill="#111" text-anchor="middle" dominant-baseline="central" font-weight="bold" textLength="34.5" lengthAdjust="spacingAndGlyphs">제1종일반</text>
<text x="251.0" y="374.5" font-size="6" fill="#000" text-anchor="middle" dominant-baseline="central" font-weight="bold" textLength="12.0" lengthAdjust="spacingAndGlyphs" transform="rotate(25 251.0 374.5)">201-7</text>
<g transform="rotate(90 137.1 542.8)" font-size="9.3" fill="#111" dominant-baseline="central"><text x="120.6" y="542.8" textLength="27.2" lengthAdjust="spacingAndGlyphs" dominant-baseline="central">231-4</text><text x="148.2" y="542.8" textLength="5.4" lengthAdjust="spacingAndGlyphs" dominant-baseline="central" stroke="#111" stroke-width="0.35">도</text></g>
<g transform="rotate(90 166.9 540.0)" font-size="9.3" fill="#111" dominant-baseline="central"><text x="150.4" y="540.0" textLength="27.2" lengthAdjust="spacingAndGlyphs" dominant-baseline="central">245-2</text><text x="178.0" y="540.0" textLength="5.4" lengthAdjust="spacingAndGlyphs" dominant-baseline="central" stroke="#111" stroke-width="0.35">도</text></g>
<g transform="rotate(90 182.7 532.5)" font-size="9.3" fill="#111" dominant-baseline="central"><text x="163.2" y="532.5" textLength="33.2" lengthAdjust="spacingAndGlyphs" dominant-baseline="central">245-10</text><text x="196.8" y="532.5" textLength="5.4" lengthAdjust="spacingAndGlyphs" dominant-baseline="central" stroke="#111" stroke-width="0.35">대</text></g>
<g transform="rotate(90 199.5 540.0)" font-size="8.4" fill="#111" dominant-baseline="central"><text x="185.5" y="540.0" textLength="22.8" lengthAdjust="spacingAndGlyphs" dominant-baseline="central">244-6</text><text x="208.6" y="540.0" textLength="4.9" lengthAdjust="spacingAndGlyphs" dominant-baseline="central" stroke="#111" stroke-width="0.35">대</text></g>
<g transform="rotate(90 220.9 543.7)" font-size="9.3" fill="#111" dominant-baseline="central"><text x="201.4" y="543.7" textLength="33.2" lengthAdjust="spacingAndGlyphs" dominant-baseline="central">244-23</text><text x="235.0" y="543.7" textLength="5.4" lengthAdjust="spacingAndGlyphs" dominant-baseline="central" stroke="#111" stroke-width="0.35">대</text></g>
<g font-size="9.3" fill="#111" dominant-baseline="central"><text x="231.5" y="544.6" textLength="27.2" lengthAdjust="spacingAndGlyphs" dominant-baseline="central">244-22</text><text x="259.1" y="544.6" textLength="5.4" lengthAdjust="spacingAndGlyphs" dominant-baseline="central" stroke="#111" stroke-width="0.35">대</text></g>
<g font-size="9.3" fill="#111" dominant-baseline="central"><text x="272.5" y="546.5" textLength="27.2" lengthAdjust="spacingAndGlyphs" dominant-baseline="central">244-16</text><text x="300.1" y="546.5" textLength="5.4" lengthAdjust="spacingAndGlyphs" dominant-baseline="central" stroke="#111" stroke-width="0.35">대</text></g>
<text x="188.3" y="493.4" font-size="5.5" fill="#000" text-anchor="middle" dominant-baseline="central" font-weight="bold" textLength="11.0" lengthAdjust="spacingAndGlyphs">246-97</text>
<text x="216.2" y="495.3" font-size="5.5" fill="#000" text-anchor="middle" dominant-baseline="central" font-weight="bold" textLength="12.0" lengthAdjust="spacingAndGlyphs" transform="rotate(15 216.2 495.3)">244-27</text>
<text x="250.8" y="503.3" font-size="5.5" fill="#000" text-anchor="middle" dominant-baseline="central" font-weight="bold" textLength="11.0" lengthAdjust="spacingAndGlyphs" transform="rotate(15 250.8 503.3)">244-28</text>
<text x="289.0" y="513.0" font-size="5.5" fill="#000" text-anchor="middle" dominant-baseline="central" font-weight="bold" textLength="11.0" lengthAdjust="spacingAndGlyphs" transform="rotate(15 289.0 513.0)">244-29</text>
<text x="330.9" y="524.0" font-size="5.5" fill="#000" text-anchor="middle" dominant-baseline="central" font-weight="bold" textLength="11.0" lengthAdjust="spacingAndGlyphs" transform="rotate(15 330.9 524.0)">244-30</text>
<text x="312.5" y="552.0" font-size="6.5" fill="#000" text-anchor="middle" dominant-baseline="central" font-weight="bold" textLength="24.0" lengthAdjust="spacingAndGlyphs" transform="rotate(-80 312.5 552.0)">244-17대</text>
<text x="327.2" y="545.0" font-size="6.5" fill="#000" text-anchor="middle" dominant-baseline="central" font-weight="bold" textLength="18.0" lengthAdjust="spacingAndGlyphs" transform="rotate(-80 327.2 545.0)">244-18</text>
<text x="342.6" y="547.0" font-size="6.5" fill="#000" text-anchor="middle" dominant-baseline="central" font-weight="bold" textLength="18.0" lengthAdjust="spacingAndGlyphs" transform="rotate(-80 342.6 547.0)">244-19</text>
<text x="322.5" y="571.0" font-size="6.5" fill="#000" text-anchor="middle" dominant-baseline="central" font-weight="bold" textLength="17.0" lengthAdjust="spacingAndGlyphs" transform="rotate(-80 322.5 571.0)">244-20</text>
<text x="340.2" y="573.5" font-size="6.5" fill="#000" text-anchor="middle" dominant-baseline="central" font-weight="bold" textLength="15.0" lengthAdjust="spacingAndGlyphs" transform="rotate(-80 340.2 573.5)">244-21</text>
<g font-size="9.3" fill="#111" dominant-baseline="central"><text x="235.0" y="482.2" textLength="12.2" lengthAdjust="spacingAndGlyphs" dominant-baseline="central">385</text><text x="247.6" y="482.2" textLength="5.4" lengthAdjust="spacingAndGlyphs" dominant-baseline="central" stroke="#111" stroke-width="0.35">도</text></g>
<text x="313.0" y="478.0" font-size="6" fill="#000" text-anchor="middle" dominant-baseline="central" font-weight="bold" textLength="12.0" lengthAdjust="spacingAndGlyphs" transform="rotate(-85 313.0 478.0)">200-14</text>
<text x="180.5" y="573.0" font-size="6" fill="#000" text-anchor="middle" dominant-baseline="central" font-weight="bold" textLength="9.0" lengthAdjust="spacingAndGlyphs">245-9</text>
<text x="163.5" y="282.0" font-size="6" fill="#000" text-anchor="middle" dominant-baseline="central" font-weight="bold" textLength="10.0" lengthAdjust="spacingAndGlyphs" transform="rotate(75 163.5 282.0)">265</text>
<text x="164.5" y="345.0" font-size="5.5" fill="#000" text-anchor="middle" dominant-baseline="central" font-weight="bold" textLength="14.0" lengthAdjust="spacingAndGlyphs" transform="rotate(85 164.5 345.0)">264도</text>
<text x="144.0" y="514.0" font-size="5.5" fill="#000" text-anchor="middle" dominant-baseline="central" font-weight="bold" textLength="12.0" lengthAdjust="spacingAndGlyphs" transform="rotate(85 144.0 514.0)">231-5</text>
<text x="117.5" y="481.0" font-size="5.5" fill="#000" text-anchor="middle" dominant-baseline="central" font-weight="bold" textLength="13.0" lengthAdjust="spacingAndGlyphs" transform="rotate(88 117.5 481.0)">212-3</text>
<text x="101.0" y="392.5" font-size="5" fill="#000" text-anchor="middle" dominant-baseline="central" font-weight="bold" textLength="9.0" lengthAdjust="spacingAndGlyphs" transform="rotate(15 101.0 392.5)">213-4</text>
<text x="88.5" y="426.4" font-size="10.5" fill="#f00000" text-anchor="middle" dominant-baseline="central" textLength="76.0" lengthAdjust="spacingAndGlyphs">가축사육제한구역</text>
<text x="182.0" y="426.4" font-size="10.5" fill="#f00000" text-anchor="middle" dominant-baseline="central" textLength="38.0" lengthAdjust="spacingAndGlyphs">도시지역</text>
<text x="250.7" y="478.5" font-size="11" fill="#f00000" text-anchor="middle" dominant-baseline="central" textLength="97.0" lengthAdjust="spacingAndGlyphs">소로1류(폭 10m~12m)</text>
<text x="259.2" y="487.8" font-size="10.5" fill="#f00000" text-anchor="middle" dominant-baseline="central" textLength="36.0" lengthAdjust="spacingAndGlyphs">도로구역</text>
</g>
</svg>
</div>
<div class="abs" style="left:383px;top:272px;width:290px;height:35px;background:#f5f5f5;border-bottom:1px solid #e0e0e0;border-left:1px solid #e8e8e8;box-sizing:border-box;"></div>
<div class="abs" style="left:383px;top:307px;width:1px;height:245px;background:#ececec;"></div>
<div class="abs" style="left:384px;top:552px;width:289px;height:28px;background:#f5f5f5;"></div>
<div class="t b bl c" style="left:419.5px;top:280.5px;"><span id="t_legend" class="s" style="transform:scaleX(1.0300)">범례</span></div>
<div class="lg" style="top:321.1px;border-color:#a0a0a0;background:#fff;"></div><div class="t l11" style="left:404.8px;top:315.0px;"><span id="lg0" class="s" style="transform:scaleX(0.8894)">도시지역</span></div>
<div class="lg" style="top:337.3px;border-color:#222;background:#ffff66;"></div><div class="t l11" style="left:404.8px;top:331.2px;"><span id="lg1" class="s" style="transform:scaleX(0.9083)">제1종일반주거지역</span></div>
<div class="lg" style="top:353.5px;border-color:#333;background:#ffc0c0;"></div><div class="t l11" style="left:404.8px;top:347.4px;"><span id="lg2" class="s" style="transform:scaleX(0.9050)">일반상업지역</span></div>
<div class="lg" style="top:369.7px;border-color:#efd58a;background:#fff;"></div><div class="t l11" style="left:404.8px;top:363.6px;"><span id="lg3" class="s" style="transform:scaleX(0.9050)">도로구역</span></div>
<div class="lg" style="top:385.9px;border-color:#111;background:#fff;"></div><div class="t l11" style="left:404.8px;top:379.8px;"><span id="lg4" class="s" style="transform:scaleX(0.9174)">가축사육제한구역</span></div>
<div class="lg" style="top:402.1px;border-color:#f00;background:#fff;"></div><div class="t l11" style="left:404.8px;top:396.0px;"><span id="lg5" class="s" style="transform:scaleX(0.9029)">중로1류(폭 20m~25m)</span></div>
<div class="lg" style="top:418.3px;border-color:#f00;background:#fff;"></div><div class="t l11" style="left:404.8px;top:412.2px;"><span id="lg6" class="s" style="transform:scaleX(0.9029)">소로1류(폭 10m~12m)</span></div>
<div class="lg" style="top:434.5px;border-color:#f00;background:#fff;"></div><div class="t l11" style="left:404.8px;top:428.4px;"><span id="lg7" class="s" style="transform:scaleX(0.9124)">소로3류(폭 8m 미만)</span></div>
<div class="lg" style="top:450.7px;border-color:#b8a98c;background:#fff;"></div><div class="t l11" style="left:404.8px;top:444.6px;"><span id="lg8" class="s" style="transform:scaleX(0.9055)">법정동</span></div>
<div class="abs" style="left:388px;top:566px;width:9px;height:10px;border:1px solid #555;background:#fff;"></div>
<div class="abs" style="left:510px;top:559px;width:73px;height:30px;border:1px solid #8a8a8a;box-sizing:border-box;background:#fff;"></div>
<div class="abs" style="left:566px;top:568px;width:0;height:0;border-left:4.6px solid transparent;border-right:4.6px solid transparent;border-top:6.6px solid #0d2238;"></div>
<div class="abs" style="left:591px;top:560px;width:30px;height:20px;background:#8c8c8c;"></div>
<div class="abs" style="left:660px;top:560px;width:20px;height:20px;background:#999;"></div>
<svg class="abs" style="left:660px;top:560px;" width="13" height="20" viewBox="660 560 13 20"><circle cx="671" cy="570.6" r="7.4" fill="none" stroke="#d4d4d4" stroke-width="1.8"/><path d="M667.5 570.6h7M671 567v7.2" stroke="#d4d4d4" stroke-width="1.6"/></svg>
<div class="t" style="left:403px;top:562.0px;"><span id="t_small" class="s" style="transform:scaleX(0.9071)">작은글씨확대</span></div>
<div class="t" style="left:473.2px;top:562.0px;"><span id="t_scale" class="s" style="transform:scaleX(0.9581)">축적1 /</span></div>
<div class="t" style="left:521.3px;top:562.3px;"><span id="t_1200" class="s" style="transform:scaleX(0.8875)">1200</span></div>
<div class="t c" style="left:456.0px;top:563.0px;color:#e6e6e6;"><span id="t_chg" class="s" style="transform:scaleX(0.9200)">변경</span></div>
</body>
</html>
